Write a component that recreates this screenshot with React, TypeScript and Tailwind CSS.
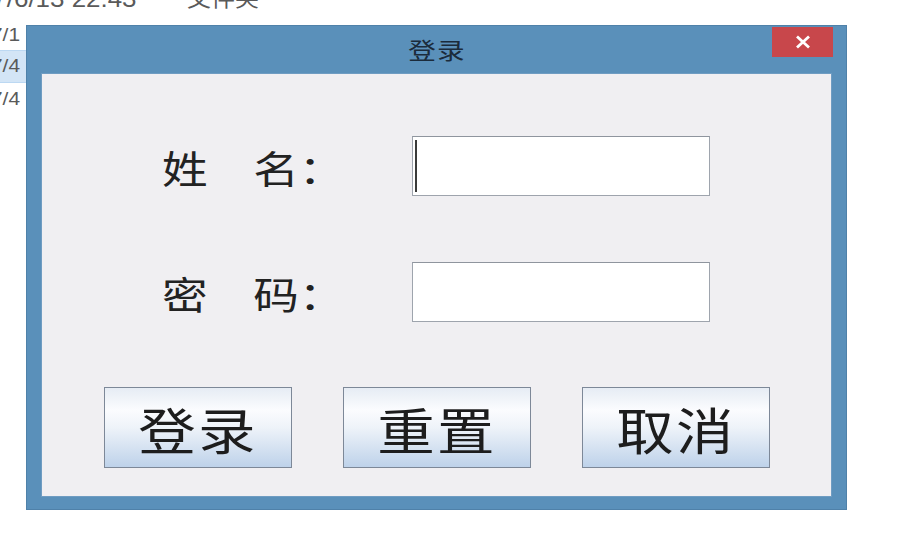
import React from "react";

const CJK = "font-['Noto_Sans_CJK_SC','Noto_Sans',sans-serif]";

function Field({ caret }: { caret?: boolean }) {
  return (
    <div className="w-[298px] h-[60px] bg-white border border-[#9ea4ad] border-t-[#8f959e] flex items-center">
      {caret ? <div className="ml-[2px] w-[2px] h-[52px] bg-[#3a3a3a]" /> : null}
    </div>
  );
}

function Btn({ label }: { label: string }) {
  return (
    <div className="w-[188px] h-[81px] border border-[#7d8898] bg-[linear-gradient(to_bottom,#e6ecf4_0%,#fbfcfe_28%,#eef3f9_50%,#bed2ea_100%)] flex items-center justify-center">
      <span className="text-[50px] leading-none text-[#1d1d1d] scale-x-[1.15] inline-block tracking-[2px]">
        {label}
      </span>
    </div>
  );
}

export default function App() {
  return (
    <div className={`relative w-[900px] h-[540px] bg-white overflow-hidden ${CJK}`}>
      {/* background explorer fragment */}
      <div className="flex flex-col text-[#5a5a5a]">
        <div className="flex items-end h-[22px] -mt-[12px] leading-[22px]">
          <div className="w-[136px] flex justify-end whitespace-nowrap text-[24px]">
            <span className="font-['Liberation_Sans',sans-serif] scale-x-[1.08] origin-right inline-block">2017/6/13 22:43</span>
          </div>
          <span className="ml-[51px] inline-block scale-x-[1.2] origin-left text-[20px] leading-[22px]">文件夹</span>
        </div>
        <div className="w-[40px] h-[40px] flex items-center pt-[10px] font-['Liberation_Sans',sans-serif] text-[19px]">
          <span className="-ml-[9px] scale-x-[1.1] origin-left inline-block">7/1</span>
        </div>
        <div className="w-[40px] h-[33px] flex items-center bg-[#d3e5f6] border-y border-[#bcd8f2] font-['Liberation_Sans',sans-serif] text-[19px]">
          <span className="-ml-[9px] scale-x-[1.1] origin-left inline-block">7/4</span>
        </div>
        <div className="w-[40px] h-[32px] flex items-center font-['Liberation_Sans',sans-serif] text-[19px]">
          <span className="-ml-[9px] scale-x-[1.1] origin-left inline-block">7/4</span>
        </div>
      </div>

      {/* dialog window */}
      <div className="absolute left-[26px] top-[25px] w-[821px] h-[485px] bg-[#5a90ba] border border-[#4f81a9] flex flex-col px-[14px] pb-[12px]">
        <div className="relative h-[47px] flex items-center justify-center">
          <span className="text-[23px] leading-none text-[#1b2b3b] scale-x-[1.2] inline-block tracking-[1px]">登录</span>
          <div className="absolute -right-[1px] top-[1px] w-[61px] h-[30px] bg-[#c8474b] flex items-center justify-center">
            <svg width="18" height="14" viewBox="0 0 18 14">
              <path d="M3 1.5 L15 12.5 M15 1.5 L3 12.5" stroke="#ffffff" strokeWidth="2.8" strokeLinecap="butt" />
            </svg>
          </div>
        </div>
        <div className="flex-1 bg-[#f0eff2] border border-[#6f9cc2] flex flex-col pt-[62px]">
          <div className="flex items-center pl-[120px]">
            <div className="w-[250px] pt-[4px]">
              <span className="text-[38px] leading-none text-[#222] scale-x-[1.2] origin-left inline-block">姓　名：</span>
            </div>
            <Field caret />
          </div>
          <div className="flex items-center pl-[120px] mt-[66px]">
            <div className="w-[250px] pt-[4px]">
              <span className="text-[38px] leading-none text-[#222] scale-x-[1.2] origin-left inline-block">密　码：</span>
            </div>
            <Field />
          </div>
          <div className="flex pl-[62px] gap-[51px] mt-[65px]">
            <Btn label="登录" />
            <Btn label="重置" />
            <Btn label="取消" />
          </div>
        </div>
      </div>
    </div>
  );
}
